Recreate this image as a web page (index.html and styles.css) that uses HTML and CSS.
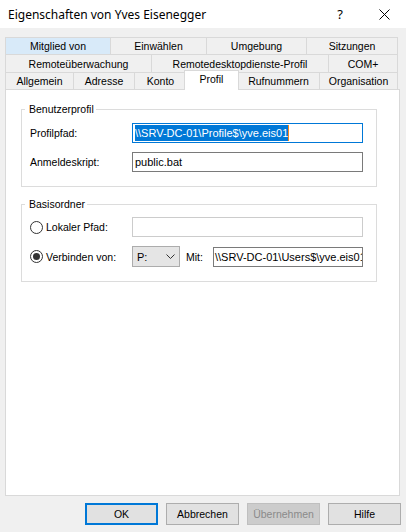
FILE: index.html
```html
<!DOCTYPE html>
<html lang="de">
<head>
<meta charset="utf-8">
<title>Eigenschaften von Yves Eisenegger</title>
<link rel="stylesheet" href="styles.css">
</head>
<body>
<div class="window">
  <div class="titlebar">
    <span class="title">Eigenschaften von Yves Eisenegger</span>
    <span class="tb-help">?</span>
    <span class="tb-close">
      <svg width="11" height="11" viewBox="0 0 11 11"><path d="M0.5 0.5 L10.5 10.5 M10.5 0.5 L0.5 10.5" stroke="#000" stroke-width="1" fill="none"/></svg>
    </span>
  </div>
  <div class="main">
    <div class="tabs">
      <div class="tabrow r1">
        <div class="tab hover t-mitglied">Mitglied von</div>
        <div class="tab t-einwaehlen">Einwählen</div>
        <div class="tab t-umgebung">Umgebung</div>
        <div class="tab last t-sitzungen">Sitzungen</div>
      </div>
      <div class="tabrow r2">
        <div class="tab t-remote">Remoteüberwachung</div>
        <div class="tab t-rdp">Remotedesktopdienste-Profil</div>
        <div class="tab last t-com">COM+</div>
      </div>
      <div class="tabrow r3">
        <div class="tab t-allgemein">Allgemein</div>
        <div class="tab t-adresse">Adresse</div>
        <div class="tab t-konto">Konto</div>
        <div class="tab sel t-profil">Profil</div>
        <div class="tab t-ruf">Rufnummern</div>
        <div class="tab last t-org">Organisation</div>
      </div>
    </div>
    <div class="panel">
      <fieldset class="group g1">
        <legend>Benutzerprofil</legend>
        <div class="frow">
          <span class="lbl">Profilpfad:</span>
          <div class="edit focus w-full"><span class="sel-text">\\SRV-DC-01\Profile$\yve.eis01</span><span class="caret"></span></div>
        </div>
        <div class="frow">
          <span class="lbl">Anmeldeskript:</span>
          <div class="edit w-full">public.bat</div>
        </div>
      </fieldset>
      <fieldset class="group g2">
        <legend>Basisordner</legend>
        <div class="frow">
          <span class="lbl"><span class="radio"></span>Lokaler Pfad:</span>
          <div class="edit disabled w-full"></div>
        </div>
        <div class="frow row-tall">
          <span class="lbl"><span class="radio checked"></span>Verbinden von:</span>
          <div class="combo"><span>P:</span>
            <svg width="9" height="5" viewBox="0 0 9 5"><path d="M0.5 0.5 L4.5 4.5 L8.5 0.5" stroke="#333" stroke-width="1" fill="none"/></svg>
          </div>
          <span class="mit">Mit:</span>
          <div class="edit w-mit">\\SRV-DC-01\Users$\yve.eis01</div>
        </div>
      </fieldset>
    </div>
    <div class="buttons">
      <button class="btn default">OK</button>
      <button class="btn">Abbrechen</button>
      <button class="btn disabled">Übernehmen</button>
      <button class="btn">Hilfe</button>
    </div>
  </div>
</div>
</body>
</html>
```
FILE: styles.css
```css
* { box-sizing: border-box; }
html, body { margin: 0; padding: 0; }
body {
  width: 406px;
  height: 532px;
  overflow: hidden;
  background: #f0f0f0;
  font-family: "Liberation Sans", Arial, sans-serif;
  font-size: 10.5px;
  color: #000;
}
.titlebar {
  height: 28px;
  background: #fff;
  display: flex;
  align-items: center;
}
.title {
  flex: 1;
  padding-left: 8px;
  font-family: "Noto Sans", "Open Sans", sans-serif;
  font-size: 12px;
}
.tb-help {
  width: 46px;
  text-align: center;
  font-family: "Noto Sans", sans-serif;
  font-size: 13px;
}
.tb-close {
  width: 43px;
  display: flex;
  justify-content: center;
}
.main { padding: 9px 6px 0 5px; }

/* tabs */
.tabs { width: 393px; }
.tabrow { display: flex; }
.r1 { height: 17px; }
.r2 { height: 18px; }
.r3 { height: 17px; align-items: flex-start; }
.tab {
  height: 100%;
  border-top: 1px solid #d9d9d9;
  border-left: 1px solid #d9d9d9;
  display: flex;
  align-items: center;
  justify-content: center;
  white-space: nowrap;
}
.tab.last { border-right: 1px solid #d9d9d9; }
.tab.hover { background: #d8eaf9; }
.tab.sel {
  position: relative;
  z-index: 1;
  height: 20px;
  margin: -2px -2px 0;
  background: #fff;
  border-right: 1px solid #d9d9d9;
  padding-bottom: 3px;
}
.t-mitglied { width: 105px; }
.t-einwaehlen { width: 96px; }
.t-umgebung { width: 100px; }
.t-sitzungen { width: 92px; }
.t-remote { width: 146px; }
.t-rdp { width: 177px; }
.t-com { width: 70px; }
.t-allgemein { width: 68px; }
.t-adresse { width: 61px; }
.t-konto { width: 52px; }
.t-profil { width: 55px; }
.t-ruf { width: 82px; }
.t-org { width: 79px; }

/* panel */
.panel {
  height: 407px;
  background: #fff;
  border: 1px solid #d9d9d9;
  padding: 13px 0 0 15px;
}
.group {
  width: 356px;
  min-width: 0;
  margin: 0;
  border: 1px solid #dcdcdc;
  padding: 7px 12px 14px 8px;
}
.group legend {
  margin-left: -5px;
  padding: 0 2px 0 4px;
  line-height: 13px;
}
.g2 { margin-top: 11px; padding-top: 6px; }
.frow {
  display: flex;
  align-items: center;
  height: 20px;
}
.frow + .frow { margin-top: 9px; }
.row-tall { height: 21px; }
.lbl {
  width: 102px;
  display: flex;
  align-items: center;
  white-space: nowrap;
}
.edit {
  height: 20px;
  border: 1px solid #7a7a7a;
  background: #fff;
  padding: 0 2px;
  display: flex;
  align-items: center;
  overflow: hidden;
  white-space: nowrap;
  font-size: 11px;
}
.edit.focus { border-color: #0078d7; }
.edit.disabled { border-color: #cccccc; }
.w-full { width: 231px; }
.w-mit { width: 150px; padding: 0 0 0 1px; align-self: flex-end; }
.sel-text {
  background: #0078d7;
  color: #fff;
  line-height: 16px;
}
.caret {
  width: 1px;
  height: 16px;
  flex: none;
  background: #f7861c;
}
.radio {
  width: 13px;
  height: 13px;
  margin-right: 3px;
  border: 1px solid #333;
  border-radius: 50%;
  background: #fff;
  display: flex;
  align-items: center;
  justify-content: center;
  flex: none;
}
.radio.checked::after {
  content: "";
  width: 7px;
  height: 7px;
  border-radius: 50%;
  background: #333;
}
.combo {
  width: 48px;
  height: 21px;
  background: #e5e5e5;
  border: 1px solid #acacac;
  padding: 0 4px 0 4px;
  display: flex;
  align-items: center;
  justify-content: space-between;
  font-size: 11px;
}
.mit {
  width: 27px;
  margin-left: 6px;
}

/* buttons */
.buttons {
  display: flex;
  justify-content: flex-end;
  gap: 8px;
  margin: 7px -1px 0 0;
}
.btn {
  width: 73px;
  height: 22px;
  margin: 0;
  padding: 0;
  border: 1px solid #adadad;
  background: #e1e1e1;
  font: inherit;
  color: #000;
  display: flex;
  align-items: center;
  justify-content: center;
}
.btn.default { border: 2px solid #0078d7; }
.btn.disabled {
  background: #cccccc;
  border-color: #bfbfbf;
  color: #8a8a8a;
}
```
